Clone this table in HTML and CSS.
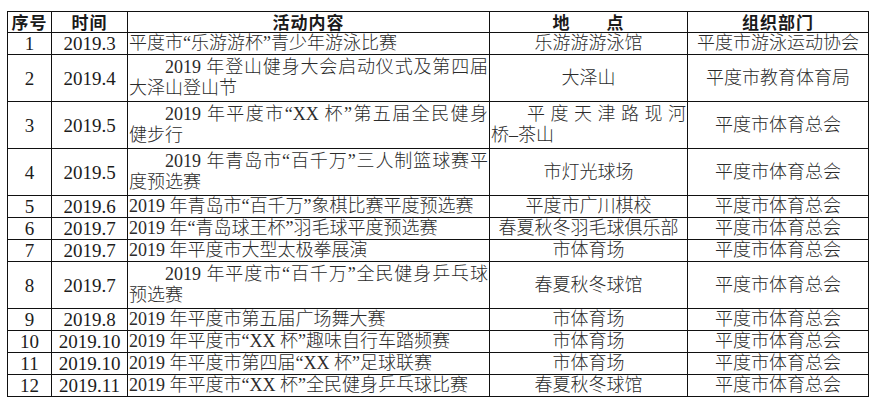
FILE: index.html
```html
<!DOCTYPE html>
<html lang="zh">
<head>
<meta charset="utf-8">
<link rel="stylesheet" href="styles.css">
</head>
<body>
<div class="page">
<table class="sched">
<colgroup>
<col class="c1"><col class="c2"><col class="c3"><col class="c4"><col class="c5">
</colgroup>
<thead>
<tr class="head">
<th>序号</th><th>时间</th><th>活动内容</th><th>地　　点</th><th>组织部门</th>
</tr>
</thead>
<tbody>
<tr class="s"><td class="n">1</td><td class="n">2019.3</td><td class="l">平度市“乐游游杯”青少年游泳比赛</td><td>乐游游游泳馆</td><td>平度市游泳运动协会</td></tr>
<tr class="d"><td class="n">2</td><td class="n">2019.4</td><td class="l"><span class="j">2019 年登山健身大会启动仪式及第四届</span><span class="b">大泽山登山节</span></td><td>大泽山</td><td>平度市教育体育局</td></tr>
<tr class="d"><td class="n">3</td><td class="n">2019.5</td><td class="l"><span class="j">2019 年平度市“XX 杯”第五届全民健身</span><span class="b">健步行</span></td><td class="l"><span class="j">平度天津路现河</span><span class="b">桥–茶山</span></td><td>平度市体育总会</td></tr>
<tr class="d"><td class="n">4</td><td class="n">2019.5</td><td class="l"><span class="j">2019 年青岛市“百千万”三人制篮球赛平</span><span class="b">度预选赛</span></td><td>市灯光球场</td><td>平度市体育总会</td></tr>
<tr class="s"><td class="n">5</td><td class="n">2019.6</td><td class="l">2019 年青岛市“百千万”象棋比赛平度预选赛</td><td>平度市广川棋校</td><td>平度市体育总会</td></tr>
<tr class="s"><td class="n">6</td><td class="n">2019.7</td><td class="l">2019 年“青岛球王杯”羽毛球平度预选赛</td><td>春夏秋冬羽毛球俱乐部</td><td>平度市体育总会</td></tr>
<tr class="s"><td class="n">7</td><td class="n">2019.7</td><td class="l">2019 年平度市大型太极拳展演</td><td>市体育场</td><td>平度市体育总会</td></tr>
<tr class="d"><td class="n">8</td><td class="n">2019.7</td><td class="l"><span class="j">2019 年平度市“百千万”全民健身乒乓球</span><span class="b">预选赛</span></td><td>春夏秋冬球馆</td><td>平度市体育总会</td></tr>
<tr class="s"><td class="n">9</td><td class="n">2019.8</td><td class="l">2019 年平度市第五届广场舞大赛</td><td>市体育场</td><td>平度市体育总会</td></tr>
<tr class="s"><td class="n">10</td><td class="n">2019.10</td><td class="l">2019 年平度市“XX 杯”趣味自行车踏频赛</td><td>市体育场</td><td>平度市体育总会</td></tr>
<tr class="s"><td class="n">11</td><td class="n">2019.10</td><td class="l">2019 年平度市第四届“XX 杯”足球联赛</td><td>市体育场</td><td>平度市体育总会</td></tr>
<tr class="s"><td class="n">12</td><td class="n">2019.11</td><td class="l">2019 年平度市“XX 杯”全民健身乒乓球比赛</td><td>春夏秋冬球馆</td><td>平度市体育总会</td></tr>
</tbody>
</table>
</div>
</body>
</html>
```

FILE: styles.css
```css
html, body {
  margin: 0;
  padding: 0;
  background: #ffffff;
}
.page {
  padding: 11px 0 0 7px;
}
.sched {
  border-collapse: collapse;
  table-layout: fixed;
  width: 861px;
  font-family: "Liberation Serif", "Noto Sans CJK SC", serif;
  font-size: 18px;
  font-weight: 300;
  color: #2b2b2b;
}
.c1 { width: 44px; }
.c2 { width: 76px; }
.c3 { width: 362px; }
.c4 { width: 198px; }
.c5 { width: 181px; }
.sched th, .sched td {
  border: 1px solid #111111;
  padding: 0 1px;
  text-align: center;
  vertical-align: middle;
  line-height: 21px;
  white-space: nowrap;
}
.sched td {
  overflow: hidden;
}
.head th {
  height: 20px;
  padding: 0;
  font-family: "Noto Sans CJK SC", sans-serif;
  font-weight: 700;
  font-size: 17px;
  letter-spacing: 1px;
  color: #1a1a1a;
  line-height: 20px;
}
.s td { height: 21px; }
.d td { height: 46px; }
.sched td.n {
  color: #1c1c1c;
  font-weight: 400;
  font-size: 19px;
}
.sched td.l {
  text-align: left;
}
.j {
  display: block;
  text-indent: 2em;
  text-align: justify;
  text-align-last: justify;
  white-space: normal;
}
.b {
  display: block;
}
```
